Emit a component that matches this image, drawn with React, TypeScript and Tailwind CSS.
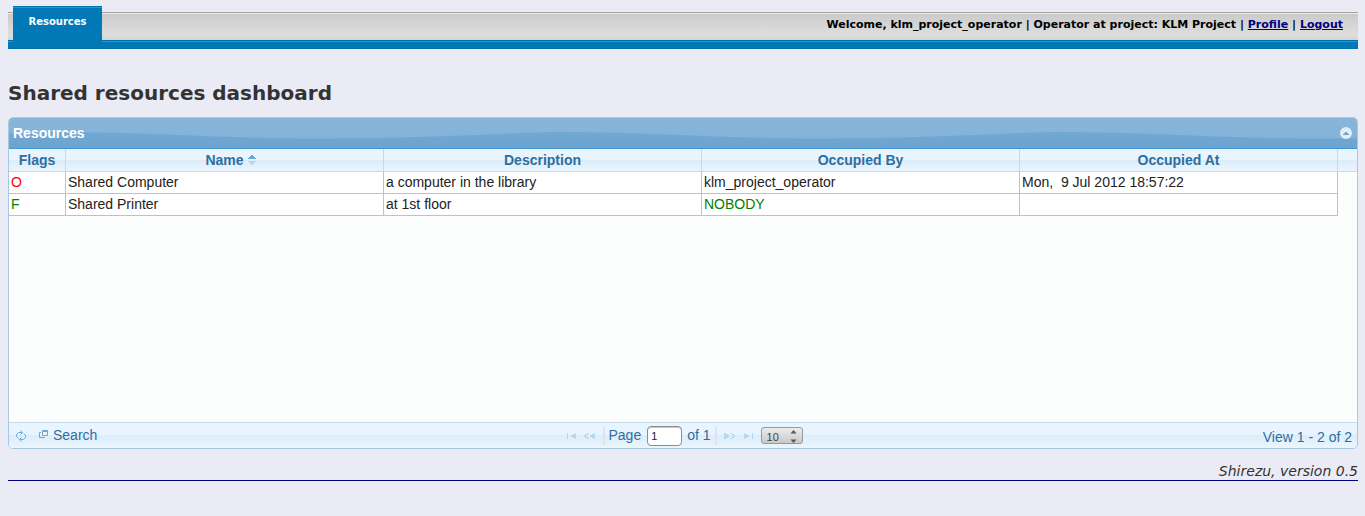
import { useState } from "react";

type Resource = {
  flag: "O" | "F";
  name: string;
  description: string;
  occupiedBy: string | null;
  occupiedAt: string;
};

const resources: Resource[] = [
  {
    flag: "O",
    name: "Shared Computer",
    description: "a computer in the library",
    occupiedBy: "klm_project_operator",
    occupiedAt: "Mon,\u00a0 9 Jul 2012 18:57:22",
  },
  {
    flag: "F",
    name: "Shared Printer",
    description: "at 1st floor",
    occupiedBy: null,
    occupiedAt: "",
  },
];

const headings = ["Flags", "Name", "Description", "Occupied By", "Occupied At"];

const glass = "bg-linear-to-b from-[#e9f5fe] from-50% via-[#dcedfa] via-50% to-[#ebf6fe]";
const cell = "h-[22px] border-r border-b border-[#a6c9e2] p-0 pb-0.5 pl-0.5 leading-[18px] whitespace-nowrap overflow-hidden";

function NavBar() {
  return (
    <header className="font-['DejaVu_Sans',sans-serif] text-[11px] font-bold">
      <div className="mt-3 flex h-7 items-start justify-between border-t border-[#a3a3a3] bg-linear-to-b from-[#cacaca] to-[#e3e3e3] shadow-[inset_0_1px_0_#ececec,inset_0_-5px_4px_-3px_#cfcfcf]">
        <a
          href="#resources"
          className="-mt-[7px] ml-[5px] block h-9 w-[89px] border-t border-[#0074b0] bg-[#0079b6] pt-[7px] text-center text-[10px] leading-4 text-white shadow-[inset_0_1px_0_#2d93c6]"
        >
          Resources
        </a>
        <p className="pt-1 pr-[15px] leading-4 text-black">
          Welcome, klm_project_operator | Operator at project: KLM Project |{" "}
          <a href="#profile" className="text-[#000080] underline">Profile</a> |{" "}
          <a href="#logout" className="text-[#000080] underline">Logout</a>
        </p>
      </div>
      <div className="h-[9px] border-y border-[#0070aa] bg-[#0079b6] pl-[5px] shadow-[inset_0_1px_0_#2d93c6]">
        <div className="-mt-px h-0.5 w-[89px] bg-[#0079b6]" />
      </div>
    </header>
  );
}

function Wave() {
  return (
    <svg className="absolute inset-0 h-full w-full" aria-hidden="true">
      <defs>
        <linearGradient id="wave-fill" x1="0" y1="0" x2="0" y2="1">
          <stop offset="0" stopColor="#72a9d3" />
          <stop offset="1" stopColor="#6ca3cf" />
        </linearGradient>
        <pattern id="wave" width="500" height="30" patternUnits="userSpaceOnUse">
          <path d="M0 15.5C25 14.4 35 14 55 14C135 14 220 20.500 305 20.500C390 20.500 450 17.500 500 15.500V30H0Z" fill="url(#wave-fill)" />
        </pattern>
      </defs>
      <rect width="100%" height="100%" fill="url(#wave)" />
    </svg>
  );
}

function PagerButton({ label, d }: { label: string; d: string }) {
  return (
    <button type="button" aria-label={label} disabled className="flex h-[18px] w-[18px] items-center justify-center">
      <svg width="12" height="6" viewBox="0 0 12 6" fill="#b5d8f0" aria-hidden="true">
        <path d={d} />
      </svg>
    </button>
  );
}

export default function App() {
  const [open, setOpen] = useState(true);
  return (
    <div className="flow-root min-h-screen bg-[#ebebf5] pr-[7px] pl-2 font-['Liberation_Sans',Arial,sans-serif]">
      <NavBar />
      <h1 className="mt-8 font-['DejaVu_Sans',sans-serif] text-[20px] leading-6 font-bold text-[#333]">
        Shared resources dashboard
      </h1>
      <section className="mt-3 overflow-hidden rounded-[5px] border border-[#a6c9e2] bg-[#fcfdfd] text-sm text-[#222]">
        <div className="relative flex h-[31px] items-center justify-between border-b border-[#4297d7] bg-linear-to-b from-[#87b5da] to-[#85b2d8] pr-[5px] pl-1">
          <Wave />
          <h2 className="relative leading-5 font-bold text-white">Resources</h2>
          <button
            type="button"
            aria-label="Toggle grid"
            aria-expanded={open}
            onClick={() => setOpen(!open)}
            className="relative flex size-3 items-center justify-center rounded-full bg-[#e3edf8]"
          >
            <svg width="6" height="3" viewBox="0 0 6 3" fill="#6da8d5" aria-hidden="true">
              <path d="M2 0H4V1H5V2H6V3H0V2H1V1H2Z" />
            </svg>
          </button>
        </div>
        {open && (
          <div className="min-h-[273px]">
            <table className="w-full table-fixed border-separate border-spacing-0">
              <colgroup>
                <col className="w-[57px]" />
                <col />
                <col />
                <col />
                <col />
                <col className="w-[19px]" />
              </colgroup>
              <thead className={glass}>
                <tr>
                  {headings.map((heading) => (
                    <th
                      key={heading}
                      scope="col"
                      className="h-[23px] border-r border-b border-[#c5dbec] p-0 leading-5 font-bold text-[#2e6e9e]"
                    >
                      {heading}
                      {heading === "Name" && (
                        <svg className="-mr-3 ml-1 inline-block align-baseline" width="8" height="10" viewBox="0 0 8 10" aria-hidden="true">
                          <path d="M3 0H5V1H6V2H7V3H8V4H0V3H1V2H2V1H3Z" fill="#6da8d5" />
                          <path d="M0 6H8V7H7V8H6V9H5V10H3V9H2V8H1V7H0Z" fill="#b9d8ee" />
                        </svg>
                      )}
                    </th>
                  ))}
                  <td className="border-b border-[#c5dbec] p-0" />
                </tr>
              </thead>
              <tbody>
                {resources.map((r) => (
                  <tr key={r.name}>
                    <td className={`${cell} bg-white ${r.flag === "O" ? "text-[#ff0000]" : "text-[#008000]"}`}>{r.flag}</td>
                    <td className={`${cell} bg-white`}>{r.name}</td>
                    <td className={`${cell} bg-white`}>{r.description}</td>
                    <td className={`${cell} bg-white ${r.occupiedBy ? "" : "text-[#008000]"}`}>{r.occupiedBy ?? "NOBODY"}</td>
                    <td className={`${cell} bg-white`}>{r.occupiedAt}</td>
                    <td className="p-0" />
                  </tr>
                ))}
              </tbody>
            </table>
          </div>
        )}
        <div className={`grid h-[26px] grid-cols-[1fr_auto_1fr] items-center border-t border-[#c5dbec] text-[#2e6e9e] ${glass}`}>
          <div className="flex items-center gap-3 pl-1.5">
            <button type="button" aria-label="Reload grid">
              <svg width="12" height="12" viewBox="0 0 12 12" fill="none" stroke="#6da8d5" aria-hidden="true">
                <path d="M3.500 8.500L1.500 6.500V4.500L3.500 2.500H7M5.500 .5L7.500 2.500L5.500 4.500M8.500 3.500L10.500 5.500V7.500L8.500 9.500H5M6.500 7.500L4.500 9.500L6.500 11.500" />
              </svg>
            </button>
            <button type="button" className="flex items-center gap-1 pb-0.5 leading-5">
              <svg width="10" height="9" viewBox="0 0 10 9" fill="none" stroke="#6da8d5" aria-hidden="true">
                <path d="M3.500 .5H8.500V5.500H3.500ZM3 1.500H9M2 2.500H.5V7.500H5.500V7" />
              </svg>
              Search
            </button>
          </div>
          <div className="flex items-center">
            <PagerButton label="First page" d="M1 0H2V6H1ZM10 0V6H9V5H7V4H5V2H7V1H9V0Z" />
            <PagerButton label="Previous page" d="M5 0V1H4V2H2V4H4V5H5V6H3V5H1V4H0V2H1V1H3V0ZM11 0V6H10V5H8V4H6V2H8V1H10V0Z" />
            <span className="ml-1 h-[18px] w-0.5 bg-[#dbe5ee]" />
            <label className="ml-[3px] flex items-center gap-1.5 leading-5">
              <span className="pb-0.5">Page</span>
              <input
                defaultValue="1"
                className="h-5 w-[35px] rounded-[4px] border border-[#8c8c8c] bg-white px-[3px] text-[11px] text-[#222] shadow-[inset_0_1px_0_#c8c8c8]"
              />
            </label>
            <span className="ml-[5px] pb-0.5 leading-5">of 1</span>
            <span className="ml-1 h-[18px] w-0.5 bg-[#dbe5ee]" />
            <span className="w-1" />
            <PagerButton label="Next page" d="M0 0H2V1H4V2H5V4H4V5H2V6H0ZM6 0H8V1H10V2H11V4H10V5H8V6H6V5H8V4H9V2H8V1H6Z" />
            <PagerButton label="Last page" d="M2 0H3V1H5V2H7V4H5V5H3V6H2ZM10 0H11V6H10Z" />
            <span className="relative ml-1 flex">
              <select
                aria-label="Rows per page"
                defaultValue="10"
                className="h-[17px] w-[42px] appearance-none rounded-[3px] border border-[#999] bg-linear-to-b from-[#ececec] to-[#c9c9c9] px-[5px] pt-[3px] text-[11px] leading-3 text-[#444]"
              >
                <option>10</option>
                <option>20</option>
                <option>30</option>
              </select>
              <svg className="pointer-events-none absolute top-[3px] right-[6px]" width="7" height="13" viewBox="0 0 7 13" fill="#555" aria-hidden="true">
                <path d="M3.500 0L6.500 3.500H.5ZM.5 9.500H6.500L3.500 13Z" />
              </svg>
            </span>
          </div>
          <p className="pt-0.5 pr-[5px] text-right leading-5">View 1 - 2 of 2</p>
        </div>
      </section>
      <footer className="mt-[13px] border-b border-[#000080] text-right font-['DejaVu_Sans',sans-serif] text-[14px] leading-[18px] text-[#333] italic">
        Shirezu, version 0.5
      </footer>
    </div>
  );
}
